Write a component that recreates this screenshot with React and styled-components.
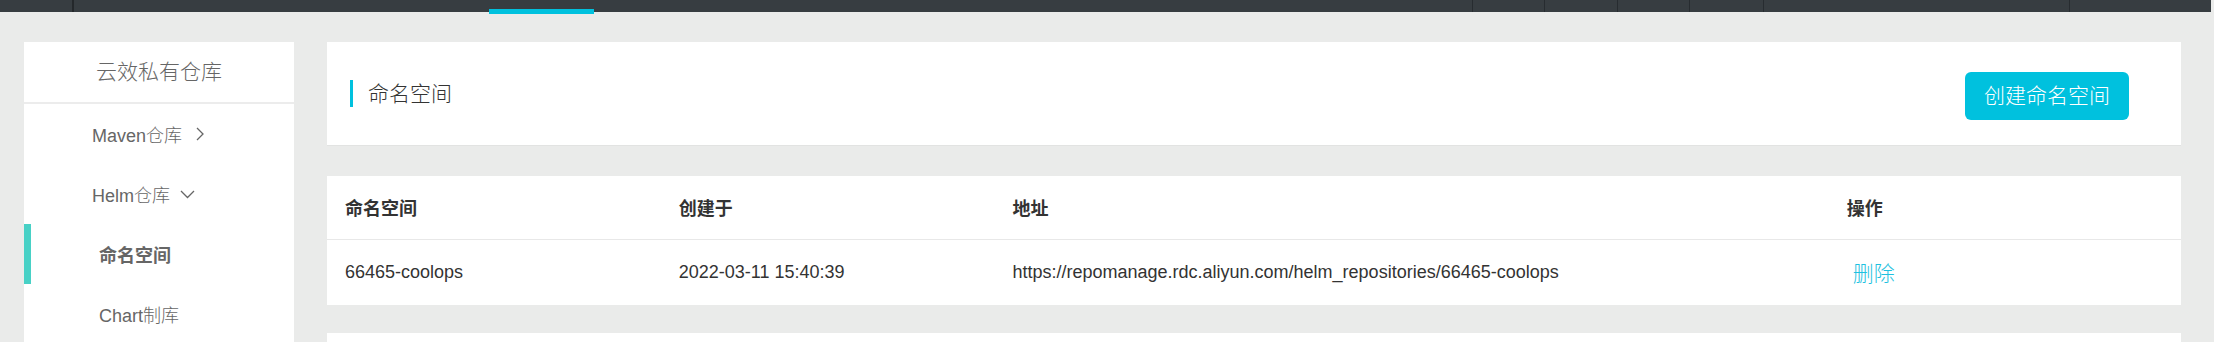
import React from 'react';
import styled, { createGlobalStyle, css } from 'styled-components';

const GlobalStyle = createGlobalStyle`
  html, body {
    margin: 0;
    padding: 0;
    background: #eaebea;
    overflow: hidden;
  }
  body {
    font-family: "Liberation Sans", "Noto Sans CJK SC", sans-serif;
  }
  * { box-sizing: border-box; }
`;

const Page = styled.div`
  width: 2214px;
  height: 342px;
  overflow: hidden;
  display: flex;
  flex-direction: column;
`;

const TopBar = styled.header`
  height: 12px;
  flex-shrink: 0;
  margin-right: 3px;
  background: #373d41;
  display: flex;
`;

const Brand = styled.div`
  width: 74px;
  border-right: 2px solid #24282b;
`;

const NavMenu = styled.nav`
  flex: 1;
  display: flex;
  padding-left: 415px;
`;

const NavTab = styled.div`
  position: relative;
  width: 105px;
  ${p => p.$active && css`
    &::after {
      content: '';
      position: absolute;
      left: 0;
      right: 0;
      top: 9px;
      height: 5px;
      background: #00c1de;
    }
  `}
`;

const NavTool = styled.div`
  width: ${p => p.$w}px;
  border-left: 1px solid #272c30;
`;

const Body = styled.div`
  flex: 1;
  display: flex;
  align-items: flex-start;
  gap: 33px;
  padding: 30px 33px 0 24px;
`;

const Sidebar = styled.aside`
  width: 270px;
  flex-shrink: 0;
  background: #fff;
`;

const SideHeader = styled.div`
  height: 62px;
  line-height: 60px;
  text-align: center;
  font-size: 21px;
  font-weight: 300;
  color: #666;
  border-bottom: 2px solid #ececec;
`;

const SideItem = styled.div`
  height: 60px;
  display: flex;
  align-items: center;
  padding-left: ${p => (p.$sub ? 68 : 61)}px;
  border-left: 7px solid ${p => (p.$active ? '#48d1c6' : 'transparent')};
  font-size: 18px;
  color: #666;
  font-weight: ${p => (p.$active ? 700 : 300)};
`;

const Chevron = styled.svg`
  margin-left: ${p => p.$gap}px;
  flex-shrink: 0;
`;

const Main = styled.main`
  flex: 1;
  display: flex;
  flex-direction: column;
`;

const HeaderCard = styled.section`
  height: 104px;
  background: #fff;
  border-bottom: 1px solid #e2e3e2;
  display: flex;
  align-items: flex-start;
  justify-content: space-between;
  padding: 0 52px 0 23px;
`;

const Title = styled.h2`
  margin: 38px 0 0;
  height: 27px;
  line-height: 27px;
  border-left: 3px solid #00c1de;
  padding-left: 15px;
  font-size: 21px;
  font-weight: 300;
  color: #333;
`;

const CreateButton = styled.button`
  margin-top: 30px;
  height: 48px;
  padding: 0 19px;
  background: #00c1de;
  color: #fff;
  border: none;
  border-radius: 6px;
  font-family: inherit;
  font-size: 21px;
  font-weight: 300;
  line-height: 48px;
`;

const TableCard = styled.section`
  margin-top: ${p => p.$mt}px;
  background: #fff;
  min-height: ${p => p.$minH || 0}px;
`;

const Table = styled.table`
  width: 100%;
  border-collapse: collapse;
  table-layout: fixed;
`;

const Th = styled.th`
  height: 63px;
  padding: 0 18px;
  text-align: left;
  font-size: 18px;
  font-weight: 700;
  color: #333;
  border-bottom: 1px solid #e8e8e8;
`;

const Td = styled.td`
  height: 66px;
  padding: 0 18px;
  font-size: 18px;
  color: #333;
  white-space: nowrap;
`;

const DeleteLink = styled.button`
  background: none;
  border: none;
  padding: 0 6px;
  font-family: inherit;
  font-size: 21px;
  font-weight: 300;
  color: #1ec1e0;
`;

const columns = [
  { key: 'ns', label: '命名空间', width: '18%' },
  { key: 'created', label: '创建于', width: '18%' },
  { key: 'addr', label: '地址', width: '45%' },
  { key: 'op', label: '操作', width: '19%' },
];

const rows = [
  {
    ns: '66465-coolops',
    created: '2022-03-11 15:40:39',
    addr: 'https://repomanage.rdc.aliyun.com/helm_repositories/66465-coolops',
  },
];

export default function App() {
  return (
    <>
      <GlobalStyle />
      <Page>
        <TopBar>
          <Brand />
          <NavMenu>
            <NavTab $active />
          </NavMenu>
          <NavTool $w={72} />
          <NavTool $w={73} />
          <NavTool $w={72} />
          <NavTool $w={74} />
          <NavTool $w={306} />
          <NavTool $w={142} />
        </TopBar>
        <Body>
          <Sidebar>
            <SideHeader>云效私有仓库</SideHeader>
            <SideItem>
              Maven仓库
              <Chevron $gap={14} width="8" height="14" viewBox="0 0 8 14">
                <path d="M1 1 L7 7 L1 13" fill="none" stroke="#666" strokeWidth="1.3" />
              </Chevron>
            </SideItem>
            <SideItem>
              Helm仓库
              <Chevron $gap={10} width="15" height="9" viewBox="0 0 15 9">
                <path d="M1 1 L7.5 7.5 L14 1" fill="none" stroke="#666" strokeWidth="1.3" />
              </Chevron>
            </SideItem>
            <SideItem $sub $active>命名空间</SideItem>
            <SideItem $sub>Chart制库</SideItem>
          </Sidebar>
          <Main>
            <HeaderCard>
              <Title>命名空间</Title>
              <CreateButton>创建命名空间</CreateButton>
            </HeaderCard>
            <TableCard $mt={30}>
              <Table>
                <colgroup>
                  {columns.map(c => (
                    <col key={c.key} style={{ width: c.width }} />
                  ))}
                </colgroup>
                <thead>
                  <tr>
                    {columns.map(c => (
                      <Th key={c.key}>{c.label}</Th>
                    ))}
                  </tr>
                </thead>
                <tbody>
                  {rows.map(r => (
                    <tr key={r.ns}>
                      <Td>{r.ns}</Td>
                      <Td>{r.created}</Td>
                      <Td>{r.addr}</Td>
                      <Td>
                        <DeleteLink>删除</DeleteLink>
                      </Td>
                    </tr>
                  ))}
                </tbody>
              </Table>
            </TableCard>
            <TableCard $mt={28} $minH={60} />
          </Main>
        </Body>
      </Page>
    </>
  );
}
